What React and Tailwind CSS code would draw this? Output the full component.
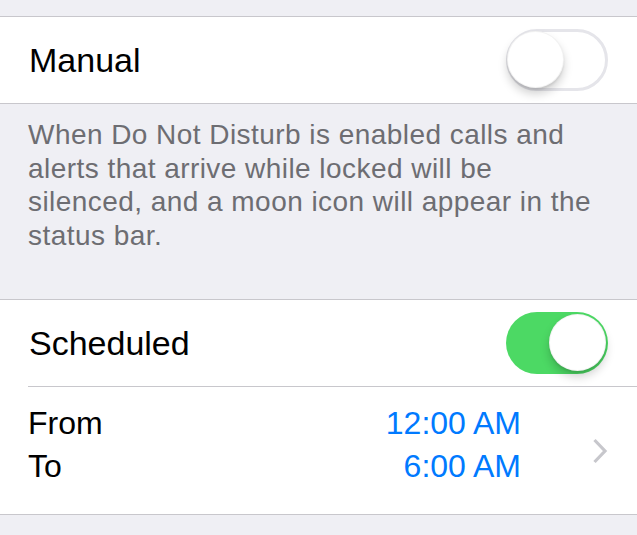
import React from "react";

function Toggle({ on }) {
  return (
    <div
      className={
        "relative w-[102px] h-[62px] rounded-full shrink-0 " +
        (on ? "bg-[#4cd964]" : "bg-white border-[3px] border-[#e5e5ea]")
      }
    >
      <div
        className={
          "absolute w-[57px] h-[57px] rounded-full bg-white border border-[rgba(0,0,0,0.05)] shadow-[0_6px_10px_rgba(0,0,0,0.18),0_2px_2px_rgba(0,0,0,0.08)] " +
          (on ? "left-[43px] top-[2px]" : "-left-[2px] -top-[1px]")
        }
      />
    </div>
  );
}

export default function App() {
  return (
    <div
      className="w-[637px] h-[535px] bg-[#efeff4] overflow-hidden flex flex-col"
      style={{ fontFamily: '"Liberation Sans", Arial, sans-serif' }}
    >
      <div className="h-[16px] shrink-0" />
      <div className="h-[88px] shrink-0 bg-white border-y border-[#c8c7cc] flex items-center justify-between pl-[29px] pr-[29px]">
        <span className="text-[34px] text-black leading-none">Manual</span>
        <Toggle on={false} />
      </div>
      <div className="h-[195px] shrink-0 pl-[28px] pr-[28px] pt-[14px] text-[28px] leading-[33.6px] tracking-[0.45px] text-[#6d6d72]">
        When Do Not Disturb is enabled calls and alerts that arrive while locked will be silenced, and a moon icon will appear in the status bar.
      </div>
      <div className="shrink-0 bg-white border-y border-[#c8c7cc]">
        <div className="h-[86px] flex items-center justify-between pl-[29px] pr-[29px]">
          <span className="text-[34px] text-black leading-none">Scheduled</span>
          <Toggle on={true} />
        </div>
        <div className="ml-[28px] border-t border-[#c8c7cc] h-[128px] flex items-start pt-[15px] pr-[29px]">
          <div className="flex-1 flex flex-col text-[32px] leading-[43px] text-black">
            <span>From</span>
            <span>To</span>
          </div>
          <div className="flex flex-col items-end text-[32px] leading-[43px] text-[#007aff] mr-[71px]">
            <span>12:00 AM</span>
            <span>6:00 AM</span>
          </div>
          <svg width="16" height="26" viewBox="0 0 16 26" className="shrink-0 self-center -mt-[14px]">
            <path d="M2.5 2 L13 13 L2.5 24" fill="none" stroke="#c7c7cc" strokeWidth="3.2" />
          </svg>
        </div>
      </div>
    </div>
  );
}
